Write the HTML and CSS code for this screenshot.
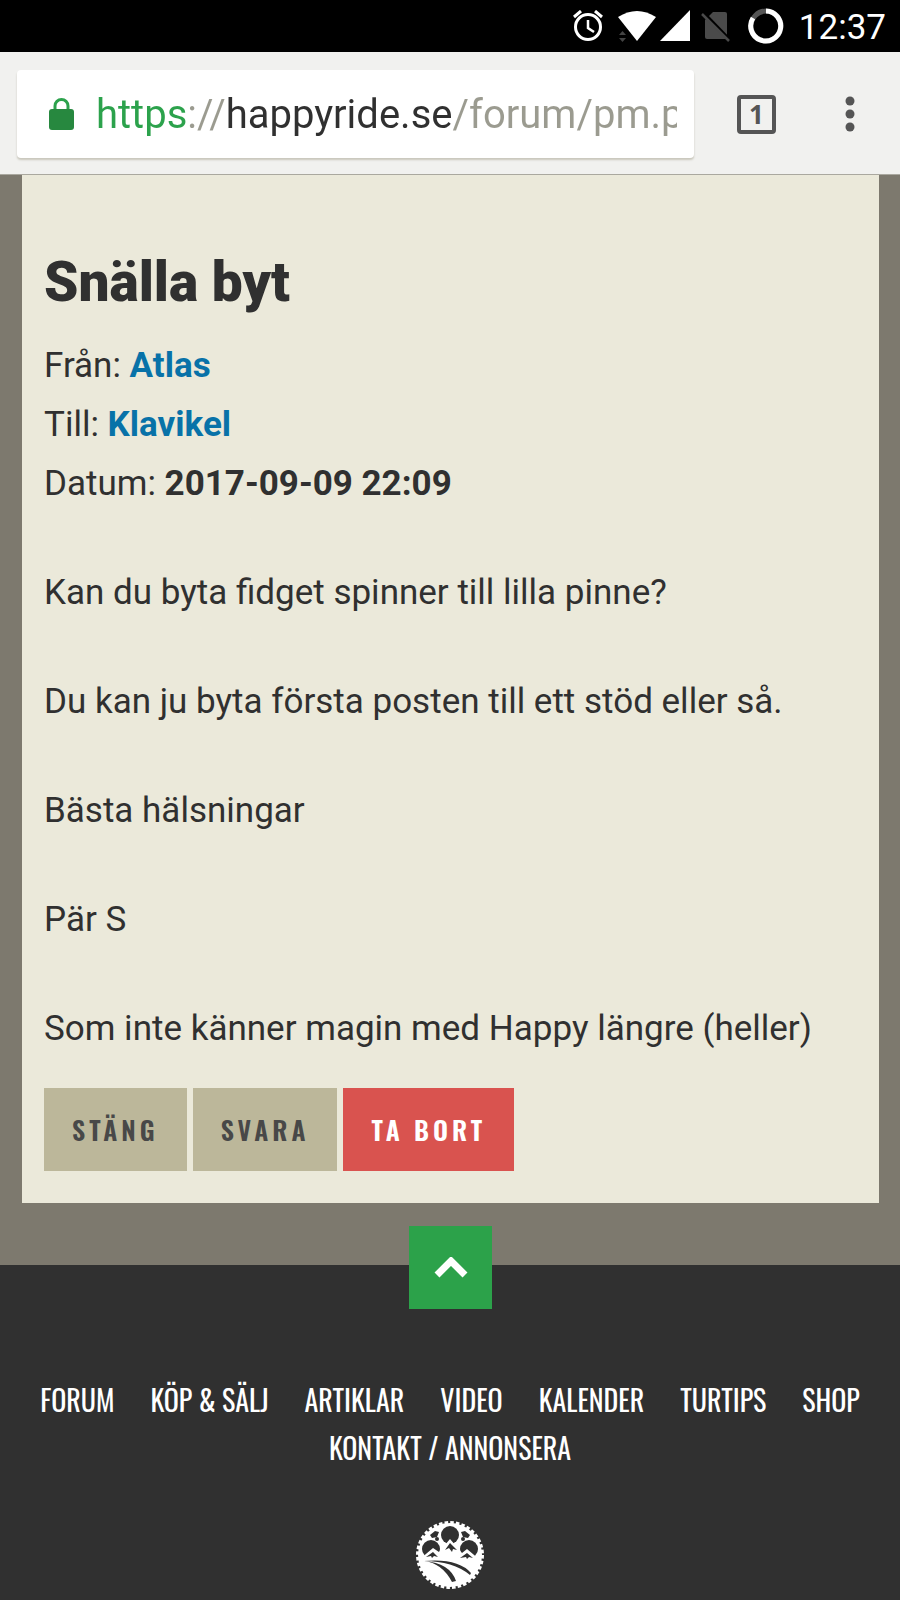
FILE: index.html
```
<!DOCTYPE html>
<html lang="sv">
<head>
    <meta charset="UTF-8">
    <meta name="viewport" content="width=device-width, initial-scale=1.0">
    <title>Snälla byt</title>
    <link rel="stylesheet" href="styles.css">
</head>
<body>

    <!-- Status Bar -->
    <div class="status-bar">
        <svg class="icon-alarm" width="32" height="32" viewBox="0 0 32 32" fill="none" stroke="#fff">
            <circle cx="16" cy="17" r="12.5" stroke-width="3"/>
            <path d="M16 10v8l6 4" stroke-width="2.5"/>
            <path d="M2 7l7-6M30 7l-7-6" stroke-width="3"/>
        </svg>
        <svg class="icon-wifi" width="38" height="32" viewBox="0 0 38 32">
            <path d="M0 7Q19-5 38 7L19 31z" fill="#fff"/>
            <path d="M1 25l3.500-4 3.500 4zM1 28h7l-3.500 4z" fill="#444"/>
        </svg>
        <svg class="icon-signal" width="31" height="32" viewBox="0 0 31 32">
            <path d="M30 0v31H0z" fill="#fff"/>
        </svg>
        <svg class="icon-nosim" width="29" height="32" viewBox="0 0 29 32">
            <path d="M12 2h12q2 0 2 2v23q0 2-2 2H6q-2 0-2-2V10z" fill="#4a4a4a"/>
            <path d="M1 1l30 31" stroke="#000" stroke-width="3"/>
            <path d="M1 4l27 27" stroke="#4a4a4a" stroke-width="2.500"/>
        </svg>
        <svg class="icon-battery" width="36" height="36" viewBox="0 0 36 36" fill="none" stroke-width="5">
            <circle cx="18" cy="18" r="15" stroke="#555"/>
            <path d="M18 3A15 15 0 1 1 5 10" stroke="#fff"/>
        </svg>
        <span class="clock">12:37</span>
    </div>

    <!-- Browser Toolbar -->
    <div class="toolbar">
        <div class="url-box">
            <svg width="25" height="32" viewBox="0 0 25 32">
                <path d="M6 13V8a6.500 6.500 0 0 1 13 0v5" fill="none" stroke="#2ca24c" stroke-width="3"/>
                <rect x="0" y="11" width="25" height="21" rx="3" fill="#27883f"/>
            </svg>
            <input type="text" class="url" aria-label="Adress" value="https://happyride.se/forum/pm.php">
        </div>
        <button type="button" class="tab-btn" aria-label="Flikar">1</button>
        <button type="button" class="menu-btn" aria-label="Meny">
            <svg width="10" height="36" viewBox="0 0 10 36" fill="#555">
                <circle cx="5" cy="5" r="4.500"/>
                <circle cx="5" cy="18" r="4.500"/>
                <circle cx="5" cy="31" r="4.500"/>
            </svg>
        </button>
    </div>

    <!-- Message Section -->
    <main>
        <div class="message">
            <h1>Snälla byt</h1>
            <div class="meta">
                <div>Från: <a href="#atlas">Atlas</a></div>
                <div>Till: <a href="#klavikel">Klavikel</a></div>
                <div>Datum: <b>2017-09-09 22:09</b></div>
            </div>
            <p>Kan du byta fidget spinner till lilla pinne?</p>
            <p>Du kan ju byta första posten till ett stöd eller så.</p>
            <p>Bästa hälsningar</p>
            <p>Pär S</p>
            <p>Som inte känner magin med Happy längre (heller)</p>
            <div class="actions">
                <button type="button" class="btn">STÄNG</button>
                <button type="button" class="btn">SVARA</button>
                <button type="button" class="btn btn-delete">TA BORT</button>
            </div>
        </div>
    </main>

    <!-- Footer Section -->
    <footer>
        <a href="#" class="to-top" aria-label="Till toppen">
            <svg width="34" height="22" viewBox="0 0 34 22">
                <path d="M3 18L17 4l14 14" fill="none" stroke="#fff" stroke-width="7"/>
            </svg>
        </a>
        <nav>
            <a href="#forum">FORUM</a>
            <a href="#kop">KÖP &amp; SÄLJ</a>
            <a href="#artiklar">ARTIKLAR</a>
            <a href="#video">VIDEO</a>
            <a href="#kalender">KALENDER</a>
            <a href="#turtips">TURTIPS</a>
            <a href="#shop">SHOP</a>
            <a href="#kontakt">KONTAKT / ANNONSERA</a>
        </nav>
        <svg class="logo" width="68" height="68" viewBox="0 0 68 68">
            <circle cx="34" cy="34" r="32" fill="#fff"/>
            <circle cx="34" cy="34" r="32" fill="none" stroke="#fff" stroke-width="4" stroke-dasharray="3.500 2.085"/>
            <!-- sprocket openings -->
            <g fill="#303030">
                <circle cx="34" cy="14" r="9"/>
                <circle cx="15" cy="28" r="9"/>
                <circle cx="53" cy="28" r="9"/>
                <path d="M14 14l5-4 4 1-2 5-5 1zM54 14l-5-4-4 1 2 5 5 1z"/>
                <circle cx="21" cy="18" r="2"/>
                <circle cx="47" cy="18" r="2"/>
            </g>
            <!-- mountains and trail -->
            <path d="M4 38L17 27l6 4 11-13 12 14 5-4 13 11-8 8H10z" fill="#fff"/>
            <g fill="#303030">
                <path d="M34 22l7 7-4-1-1 3-3-4-4 2zM17 31l5 5-4-1-2 2-1-2-5 1zM51 32l6 5-4-1-2 2-1-2-6 1z"/>
                <path d="M8 40q26 2 32 20l-4 1Q26 42 8 40z"/>
                <path d="M8 40q34-3 47 12l-1 2Q37 40 8 40z"/>
            </g>
        </svg>
    </footer>

</body>
</html>
```
FILE: styles.css
```
* {
    box-sizing: border-box;
}
body {
    font-family: Roboto, sans-serif;
    font-size: 35px;
    background-color: #7d796e;
    color: #303030;
    margin: 0;
}
button {
    border: none;
    cursor: pointer;
}
.status-bar {
    display: flex;
    align-items: center;
    justify-content: flex-end;
    height: 52px;
    padding-right: 14px;
    background-color: #000;
    color: #fff;
}
.icon-alarm {
    margin-right: 14px;
}
.icon-wifi {
    margin-right: 4px;
}
.icon-signal {
    margin-right: 10px;
}
.icon-nosim {
    margin-right: 18px;
}
.icon-battery {
    margin-right: 15px;
}
.clock {
    padding-top: 4px;
    font-size: 35px;
    line-height: 48px;
}
.toolbar {
    display: flex;
    align-items: center;
    height: 123px;
    padding: 2px 22px 0 17px;
    background-color: #f1f1ef;
    border-bottom: 1px solid #aaa89f;
}
.url-box {
    flex: 1;
    display: flex;
    align-items: center;
    min-width: 0;
    height: 88px;
    padding: 0 17px 0 32px;
    background-color: #fff;
    border-radius: 4px;
    box-shadow: 0 2px 2px #c9c7bc;
}
.url {
    flex: 1;
    min-width: 0;
    height: 60px;
    margin-left: 22px;
    padding: 0;
    border: none;
    outline: none;
    font-family: Roboto, sans-serif;
    font-size: 40px;
    color: transparent;
    /* scheme, separator, host, path */
    background: linear-gradient(to right, #2ca24c 90px, #9b9b90 90px, #9b9b90 129px, #303030 129px, #303030 356px, #9b9b90 356px);
    -webkit-background-clip: text;
    background-clip: text;
}
.tab-btn {
    width: 39px;
    height: 39px;
    margin: 0 45px 0 43px;
    padding: 0;
    border: 4px solid #555;
    border-radius: 4px;
    background: none;
    color: #555;
    font-family: "Noto Sans", sans-serif;
    font-size: 26px;
    font-weight: bold;
    line-height: 31px;
}
.menu-btn {
    display: flex;
    justify-content: center;
    width: 57px;
    padding: 0;
    background: none;
}
main {
    padding: 0 21px 62px 22px;
}
.message {
    padding: 72px 22px 32px;
    background-color: #ebe9da;
}
h1 {
    margin: 0 0 19px;
    font-size: 55px;
    font-weight: 900;
    line-height: 70px;
}
.meta {
    line-height: 59px;
}
.meta a {
    color: #0872a8;
    font-weight: bold;
    text-decoration: none;
}
p {
    margin: 50px 0 0;
    line-height: 59px;
}
.actions {
    display: flex;
    gap: 6px;
    margin-top: 30px;
}
.btn {
    height: 83px;
    padding: 0 28px;
    background-color: #bcb79a;
    color: #484848;
    font-family: Oswald, "Roboto Condensed", "Liberation Sans Narrow", sans-serif;
    font-size: 26px;
    font-weight: 600;
    letter-spacing: 4px;
}
.btn-delete {
    background-color: #d9534f;
    color: #fff;
}
footer {
    position: relative;
    padding: 111px 22px 11px;
    background-color: #303030;
    text-align: center;
}
.to-top {
    position: absolute;
    top: -39px;
    left: 50%;
    display: flex;
    align-items: center;
    justify-content: center;
    width: 83px;
    height: 83px;
    margin-left: -41px;
    background-color: #2ca24a;
}
nav {
    display: flex;
    flex-wrap: wrap;
    justify-content: center;
    column-gap: 36px;
}
nav a {
    color: #fff;
    font-family: Oswald, "Roboto Condensed", "Liberation Sans Narrow", sans-serif;
    font-size: 28px;
    line-height: 48px;
    text-decoration: none;
}
.logo {
    display: block;
    margin: 49px auto 0;
}
```
